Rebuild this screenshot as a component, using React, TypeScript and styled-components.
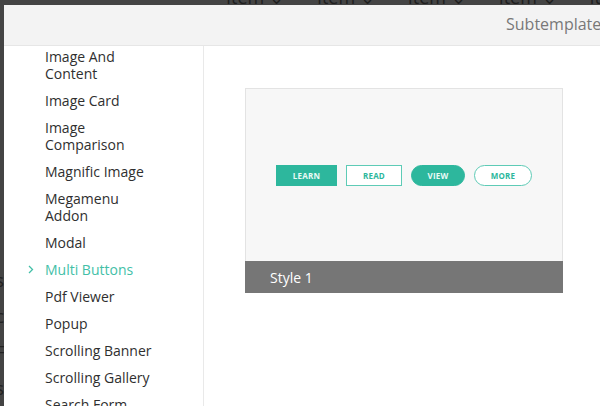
import React from 'react';
import styled, { createGlobalStyle, css } from 'styled-components';

const GlobalStyle = createGlobalStyle`
  html, body {
    margin: 0;
    padding: 0;
    background: #3f3f3f;
    overflow: hidden;
  }
  * {
    box-sizing: border-box;
  }
`;

const Screen = styled.div`
  position: relative;
  width: 600px;
  height: 406px;
  overflow: hidden;
  background: #444;
  font-family: 'Open Sans', 'Noto Sans', sans-serif;
`;

/* page behind the overlay, only its edges peek out */
const BehindNav = styled.div`
  position: absolute;
  top: -15px;
  left: 226px;
  display: flex;
  gap: 33px;
  font-size: 18px;
  color: #1e1e1e;
  white-space: nowrap;
`;

const BehindLetters = styled.div`
  position: absolute;
  left: -5px;
  top: 270px;
  display: flex;
  flex-direction: column;
  gap: 16px;
  font-size: 19px;
  color: #222;
  line-height: 20px;
`;

const Modal = styled.div`
  position: absolute;
  top: 5px;
  left: 4px;
  width: 700px;
  bottom: 0;
  display: flex;
  flex-direction: column;
  background: #fff;
`;

const Header = styled.div`
  height: 41px;
  flex-shrink: 0;
  display: flex;
  align-items: center;
  padding-left: 502px;
  padding-bottom: 2px;
  background: #f3f3f3;
  border-bottom: 1px solid #e6e6e6;
  color: #787878;
  font-size: 16px;
  white-space: nowrap;
`;

const Body = styled.div`
  flex: 1;
  display: flex;
  min-height: 0;
`;

const Sidebar = styled.ul`
  width: 200px;
  flex-shrink: 0;
  margin: 0;
  padding: 0;
  list-style: none;
  border-right: 1px solid #e9e9e9;
  overflow: hidden;
`;

const ListScroll = styled.div`
  margin-top: -3px;
`;

const Item = styled.li<{ $active?: boolean }>`
  position: relative;
  padding: 5px 20px 5px 41px;
  font-size: 14px;
  line-height: 17px;
  color: ${p => (p.$active ? '#43bfa7' : '#2f2f2f')};
`;

const Chevron = styled.svg`
  position: absolute;
  left: 24px;
  top: 9px;
`;

const Content = styled.div`
  flex: 1;
  padding: 42px 0 0 41px;
`;

const Card = styled.div`
  width: 318px;
  display: flex;
  flex-direction: column;
`;

const Preview = styled.div`
  height: 173px;
  display: flex;
  align-items: center;
  justify-content: center;
  gap: 9px;
  padding-top: 1px;
  background: #f7f7f7;
  border: 1px solid #e3e3e3;
  border-bottom: none;
`;

const Footer = styled.div`
  height: 32px;
  display: flex;
  align-items: center;
  padding-left: 25px;
  background: #767676;
  color: #fff;
  font-size: 14px;
`;

const teal = '#2db79d';

const DemoButton = styled.div<{ $outline?: boolean; $round?: boolean; $w: number }>`
  width: ${p => p.$w}px;
  height: 21px;
  display: flex;
  align-items: center;
  justify-content: center;
  font-size: 8px;
  font-weight: 700;
  letter-spacing: 0.2px;
  border: 1.5px solid ${teal};
  ${p =>
    p.$outline
      ? css`
          background: #fff;
          color: ${teal};
          border-color: #5ecbb6;
        `
      : css`
          background: ${teal};
          color: #eafaf6;
        `}
  border-radius: ${p => (p.$round ? '11px' : '0')};
`;

const items: { lines: string[]; active?: boolean }[] = [
  { lines: ['Image And', 'Content'] },
  { lines: ['Image Card'] },
  { lines: ['Image', 'Comparison'] },
  { lines: ['Magnific Image'] },
  { lines: ['Megamenu', 'Addon'] },
  { lines: ['Modal'] },
  { lines: ['Multi Buttons'], active: true },
  { lines: ['Pdf Viewer'] },
  { lines: ['Popup'] },
  { lines: ['Scrolling Banner'] },
  { lines: ['Scrolling Gallery'] },
  { lines: ['Search Form'] },
];

export default function App() {
  return (
    <>
      <GlobalStyle />
      <Screen>
        <BehindNav>
          <span>Item ⌄</span>
          <span>Item ⌄</span>
          <span>Item ⌄</span>
          <span>Item ⌄</span>
          <span>Item</span>
        </BehindNav>
        <BehindLetters>
          <span>s</span>
          <span>c</span>
          <span>F</span>
          <span>s</span>
        </BehindLetters>

        <Modal>
          <Header>Subtemplates</Header>
          <Body>
            <Sidebar>
              <ListScroll>
                {items.map(it => (
                  <Item key={it.lines.join(' ')} $active={it.active}>
                    {it.active && (
                      <Chevron width="6" height="9" viewBox="0 0 6 9">
                        <path d="M1 1l3.5 3.5L1 8" fill="none" stroke="#43bfa7" strokeWidth="1.3" />
                      </Chevron>
                    )}
                    {it.lines.map((l, i) => (
                      <React.Fragment key={i}>
                        {i > 0 && <br />}
                        {l}
                      </React.Fragment>
                    ))}
                  </Item>
                ))}
              </ListScroll>
            </Sidebar>

            <Content>
              <Card>
                <Preview>
                  <DemoButton $w={61}>LEARN</DemoButton>
                  <DemoButton $w={56} $outline>READ</DemoButton>
                  <DemoButton $w={54} $round>VIEW</DemoButton>
                  <DemoButton $w={58} $outline $round>MORE</DemoButton>
                </Preview>
                <Footer>Style 1</Footer>
              </Card>
            </Content>
          </Body>
        </Modal>
      </Screen>
    </>
  );
}
